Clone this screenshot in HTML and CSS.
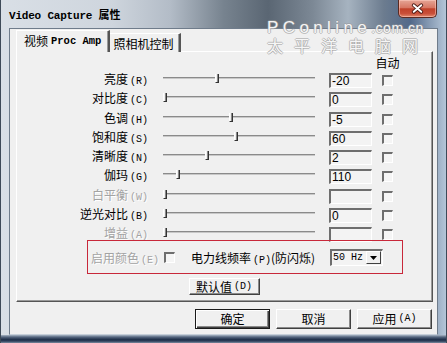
FILE: index.html
```html
<!DOCTYPE html>
<html>
<head>
<meta charset="utf-8">
<link rel="stylesheet" href="styles.css">
</head>
<body>
<div class="window">
  <div class="titlebar">
    <span class="title">Video Capture 属性</span>
    <div class="close">
      <svg width="39" height="17" viewBox="0 0 39 17">
        <path d="M15.5 5 L23.5 12 M23.5 5 L15.5 12" stroke="#4a1a14" stroke-width="4" stroke-linecap="round"/>
        <path d="M15.5 5 L23.5 12 M23.5 5 L15.5 12" stroke="#ffffff" stroke-width="2" stroke-linecap="round"/>
      </svg>
    </div>
  </div>
  <div class="client">
    <div class="tabs">
      <div class="tab active">视频 <span class="mono">Proc Amp</span></div>
      <div class="tab">照相机控制</div>
    </div>
    <div class="panel">
      <div class="grid">
        <div class="auto-head"><span>自动</span></div>

        <div class="lbl">亮度<i>(R)</i></div>
        <div class="slider"><div class="track"><span class="thumb" style="left:52px"></span></div></div>
        <div class="edit">-20</div>
        <div class="check"></div>

        <div class="lbl">对比度<i>(C)</i></div>
        <div class="slider"><div class="track"><span class="thumb" style="left:0px"></span></div></div>
        <div class="edit">0</div>
        <div class="check"></div>

        <div class="lbl">色调<i>(H)</i></div>
        <div class="slider"><div class="track"><span class="thumb" style="left:66px"></span></div></div>
        <div class="edit">-5</div>
        <div class="check"></div>

        <div class="lbl">饱和度<i>(S)</i></div>
        <div class="slider"><div class="track"><span class="thumb" style="left:71px"></span></div></div>
        <div class="edit">60</div>
        <div class="check"></div>

        <div class="lbl">清晰度<i>(N)</i></div>
        <div class="slider"><div class="track"><span class="thumb" style="left:42px"></span></div></div>
        <div class="edit">2</div>
        <div class="check"></div>

        <div class="lbl">伽玛<i>(G)</i></div>
        <div class="slider"><div class="track"><span class="thumb" style="left:13px"></span></div></div>
        <div class="edit">110</div>
        <div class="check"></div>

        <div class="lbl disabled">白平衡<i>(W)</i></div>
        <div class="slider"><div class="track"><span class="thumb" style="left:0px"></span></div></div>
        <div class="edit"></div>
        <div class="check"></div>

        <div class="lbl">逆光对比<i>(B)</i></div>
        <div class="slider"><div class="track"><span class="thumb" style="left:0px"></span></div></div>
        <div class="edit">0</div>
        <div class="check"></div>

        <div class="lbl disabled">增益<i>(A)</i></div>
        <div class="slider"><div class="track"><span class="thumb" style="left:0px"></span></div></div>
        <div class="edit"></div>
        <div class="check"></div>
      </div>

      <div class="redbox">
        <span class="color-lbl disabled">启用颜色<i>(E)</i></span>
        <span class="check"></span>
        <span class="power-lbl">电力线频率<i>(P)</i>(防闪烁)</span>
        <div class="combo">
          <span class="combo-text">50 Hz</span>
          <span class="combo-btn">
            <svg width="7" height="4" viewBox="0 0 7 4"><path d="M0 0 H7 L3.5 4 Z" fill="#000"/></svg>
          </span>
        </div>
      </div>

      <div class="defrow">
        <div class="btn small">默认值<i>(D)</i></div>
      </div>
    </div>

    <div class="buttons">
      <div class="btn big default">确定</div>
      <div class="btn big">取消</div>
      <div class="btn big">应用<i>(A)</i></div>
    </div>
  </div>

  <div class="watermark">
    <div class="wm-top"><span class="wm-pc">PConline</span><span class="wm-com">.com.cn</span></div>
    <div class="wm-cn">太平洋电脑网</div>
  </div>
</div>
</body>
</html>
```

FILE: styles.css
```css
* {
  box-sizing: border-box;
}

html, body {
  margin: 0;
  padding: 0;
}

body {
  width: 447px;
  height: 343px;
  overflow: hidden;
  font-family: "Noto Sans CJK SC", sans-serif;
  font-size: 12px;
  color: #000;
  background: #5d6b7b;
}

i {
  font-style: normal;
  font-family: "Liberation Mono", monospace;
  font-size: 10px;
  margin-left: 2px;
}

.window {
  position: relative;
  width: 447px;
  height: 343px;
  display: flex;
  flex-direction: column;
  padding: 0 8px 8px 8px;
  border-left: 1px solid #3e4a58;
  border-right: 1px solid #3e4a58;
  background:
    linear-gradient(to bottom, #a9b6c4 0, #566780 25%, #22324c 55%, #2c3c58 75%, #7b8ba0 100%) left bottom / 100% 8px no-repeat,
    linear-gradient(to right, #d9dfe6 0%, #ced5dd 25%, #b3bcc7 38%, #77838f 50%, #5a6673 60%, #7c8895 70%, #a6b3c0 78%, #6c7c8f 86%, #52698a 92%, #b5c6d8 100%);
}

.titlebar {
  height: 28px;
  display: flex;
  align-items: flex-start;
  flex-shrink: 0;
}

.title {
  align-self: center;
  margin-top: -1px;
  font-family: "Liberation Mono", "Noto Sans CJK SC", monospace;
  font-size: 11px;
  font-weight: bold;
  color: #000;
  letter-spacing: -0.2px;
}

.close {
  margin-left: auto;
  margin-right: 1px;
  width: 39px;
  height: 18px;
  border: 1px solid #5b2a22;
  border-top: none;
  border-radius: 0 0 5px 5px;
  background: linear-gradient(to bottom, #e5a596 0%, #d77764 45%, #c0412a 52%, #c9503a 80%, #e08a6e 100%);
  box-shadow: inset 0 0 0 1px rgba(255, 210, 200, 0.5);
  display: flex;
  align-items: center;
  justify-content: center;
}

.close svg {
  display: block;
}

.client {
  flex: 1;
  background: #f0f0f0;
  border: 1px solid #6f7c8b;
  border-bottom-color: #c6cfd9;
  display: flex;
  flex-direction: column;
  padding: 1px 4px 0 6px;
}

/* tabs */
.tabs {
  display: flex;
  align-items: flex-end;
  height: 22px;
  position: relative;
  z-index: 2;
  margin-bottom: -1px;
}

.tab {
  height: 19px;
  padding: 0 6px 0 3px;
  display: flex;
  align-items: center;
  border-top: 1px solid #ffffff;
  border-right: 2px solid #555;
  box-shadow: inset -1px 0 0 #9a9a9a;
  background: #f0f0f0;
  white-space: nowrap;
}

.tab.active {
  height: 22px;
  padding: 0 7px 2px 7px;
  border-left: 1px solid #ffffff;
}

.mono {
  font-family: "Liberation Mono", monospace;
  font-weight: bold;
  font-size: 10.5px;
  margin-left: 3px;
}

.panel {
  height: 251px;
  border-top: 1px solid #ffffff;
  border-left: 1px solid #ffffff;
  border-right: 1px solid #555;
  border-bottom: 1px solid #555;
  box-shadow: inset -1px -1px 0 #9a9a9a;
  display: flex;
  flex-direction: column;
}

.grid {
  display: grid;
  grid-template-columns: 146px 166px 53px 11px;
  grid-template-rows: 16.75px;
  grid-auto-rows: 15px;
  row-gap: 4.25px;
}

.auto-head {
  grid-column: 4;
  display: flex;
  justify-content: center;
  align-items: flex-end;
  line-height: 12px;
  white-space: nowrap;
}

.lbl {
  grid-column: 1;
  text-align: right;
  padding-right: 15px;
  line-height: 12px;
  align-self: start;
  white-space: nowrap;
}

.disabled {
  color: #a3a3a3;
  text-shadow: 1px 1px 0 #ffffff;
}

.slider {
  padding-top: 4px;
}

.track {
  position: relative;
  width: 152px;
  height: 2px;
  background: #8a8a8a;
  border-bottom: 1px solid #c8c8c8;
}

.thumb {
  position: absolute;
  top: -3px;
  width: 4px;
  height: 9px;
  background: #f0f0f0;
  border-left: 1px solid #ffffff;
  border-right: 1px solid #333;
  border-bottom: 1px solid #333;
  box-shadow: inset -1px 0 0 #8a8a8a;
}

.edit {
  width: 43px;
  height: 15px;
  border-style: solid;
  border-width: 2px 1px 1px 2px;
  border-color: #6e6e6e #ffffff #ffffff #6e6e6e;
  background: #f3f3f3;
  font-family: "Liberation Sans", sans-serif;
  font-size: 12px;
  line-height: 12px;
  padding-left: 1px;
}

.check {
  width: 11px;
  height: 11px;
  align-self: center;
  border-style: solid;
  border-width: 2px 1px 1px 2px;
  border-color: #6e6e6e #ffffff #ffffff #6e6e6e;
  background: #f5f5f5;
  display: block;
}

/* red box */
.redbox {
  margin: -2px 0 0 70px;
  width: 316px;
  height: 34px;
  border: 1px solid #c8283a;
  display: flex;
  align-items: center;
  padding-left: 3px;
}

.color-lbl {
  width: 73px;
  white-space: nowrap;
}

.redbox .check {
  flex-shrink: 0;
}

.power-lbl {
  width: 139px;
  margin-left: 16px;
  white-space: nowrap;
}

.combo {
  width: 53px;
  height: 17px;
  border-style: solid;
  border-width: 2px 1px 1px 2px;
  border-color: #6e6e6e #ffffff #ffffff #6e6e6e;
  background: #f3f3f3;
  display: flex;
  align-items: center;
}

.combo-text {
  flex: 1;
  font-family: "Liberation Mono", monospace;
  font-size: 10px;
  padding-left: 1px;
}

.combo-btn {
  width: 15px;
  height: 13px;
  margin-right: 1px;
  background: #f0f0f0;
  border-top: 1px solid #fff;
  border-left: 1px solid #fff;
  border-right: 1px solid #404040;
  border-bottom: 1px solid #404040;
  display: flex;
  align-items: center;
  justify-content: center;
}

.combo-btn svg {
  display: block;
}

.defrow {
  display: flex;
  justify-content: center;
  margin-top: 4px;
  padding-right: 1px;
}

.btn {
  display: flex;
  align-items: center;
  justify-content: center;
  background: #f0f0f0;
  border-top: 1px solid #ffffff;
  border-left: 1px solid #ffffff;
  border-right: 1px solid #404040;
  border-bottom: 1px solid #404040;
  box-shadow: inset -1px -1px 0 #8a8a8a;
  white-space: nowrap;
  line-height: 12px;
}

.btn.small {
  width: 71px;
  height: 17px;
}

.buttons {
  display: flex;
  justify-content: flex-end;
  gap: 6px;
  margin-top: 7px;
  padding-right: 1px;
}

.btn.big {
  width: 75px;
  height: 20px;
}

.btn.default {
  border: 1px solid #1a1a1a;
  box-shadow: inset 1px 1px 0 #ffffff, inset -1px -1px 0 #404040, inset -2px -2px 0 #8a8a8a;
}

/* watermark overlay */
.watermark {
  position: absolute;
  left: 266px;
  top: 20px;
  color: rgba(255, 255, 255, 0.92);
  text-shadow:
    -1px 0 rgba(150, 150, 150, 0.55),
    1px 0 rgba(150, 150, 150, 0.55),
    0 -1px rgba(150, 150, 150, 0.55),
    0 1px rgba(150, 150, 150, 0.55);
  pointer-events: none;
  z-index: 5;
}

.wm-top {
  display: flex;
  align-items: baseline;
  height: 15px;
  line-height: 15px;
}

.wm-pc {
  font-family: "Liberation Sans", sans-serif;
  font-size: 17px;
  letter-spacing: 4.4px;
}

.wm-com {
  font-family: "Liberation Sans", sans-serif;
  font-size: 14px;
  letter-spacing: 0.5px;
}

.wm-cn {
  margin-top: 2px;
  font-family: "Noto Sans CJK SC", sans-serif;
  font-size: 16px;
  line-height: 17px;
  height: 17px;
  letter-spacing: 11px;
}
```
